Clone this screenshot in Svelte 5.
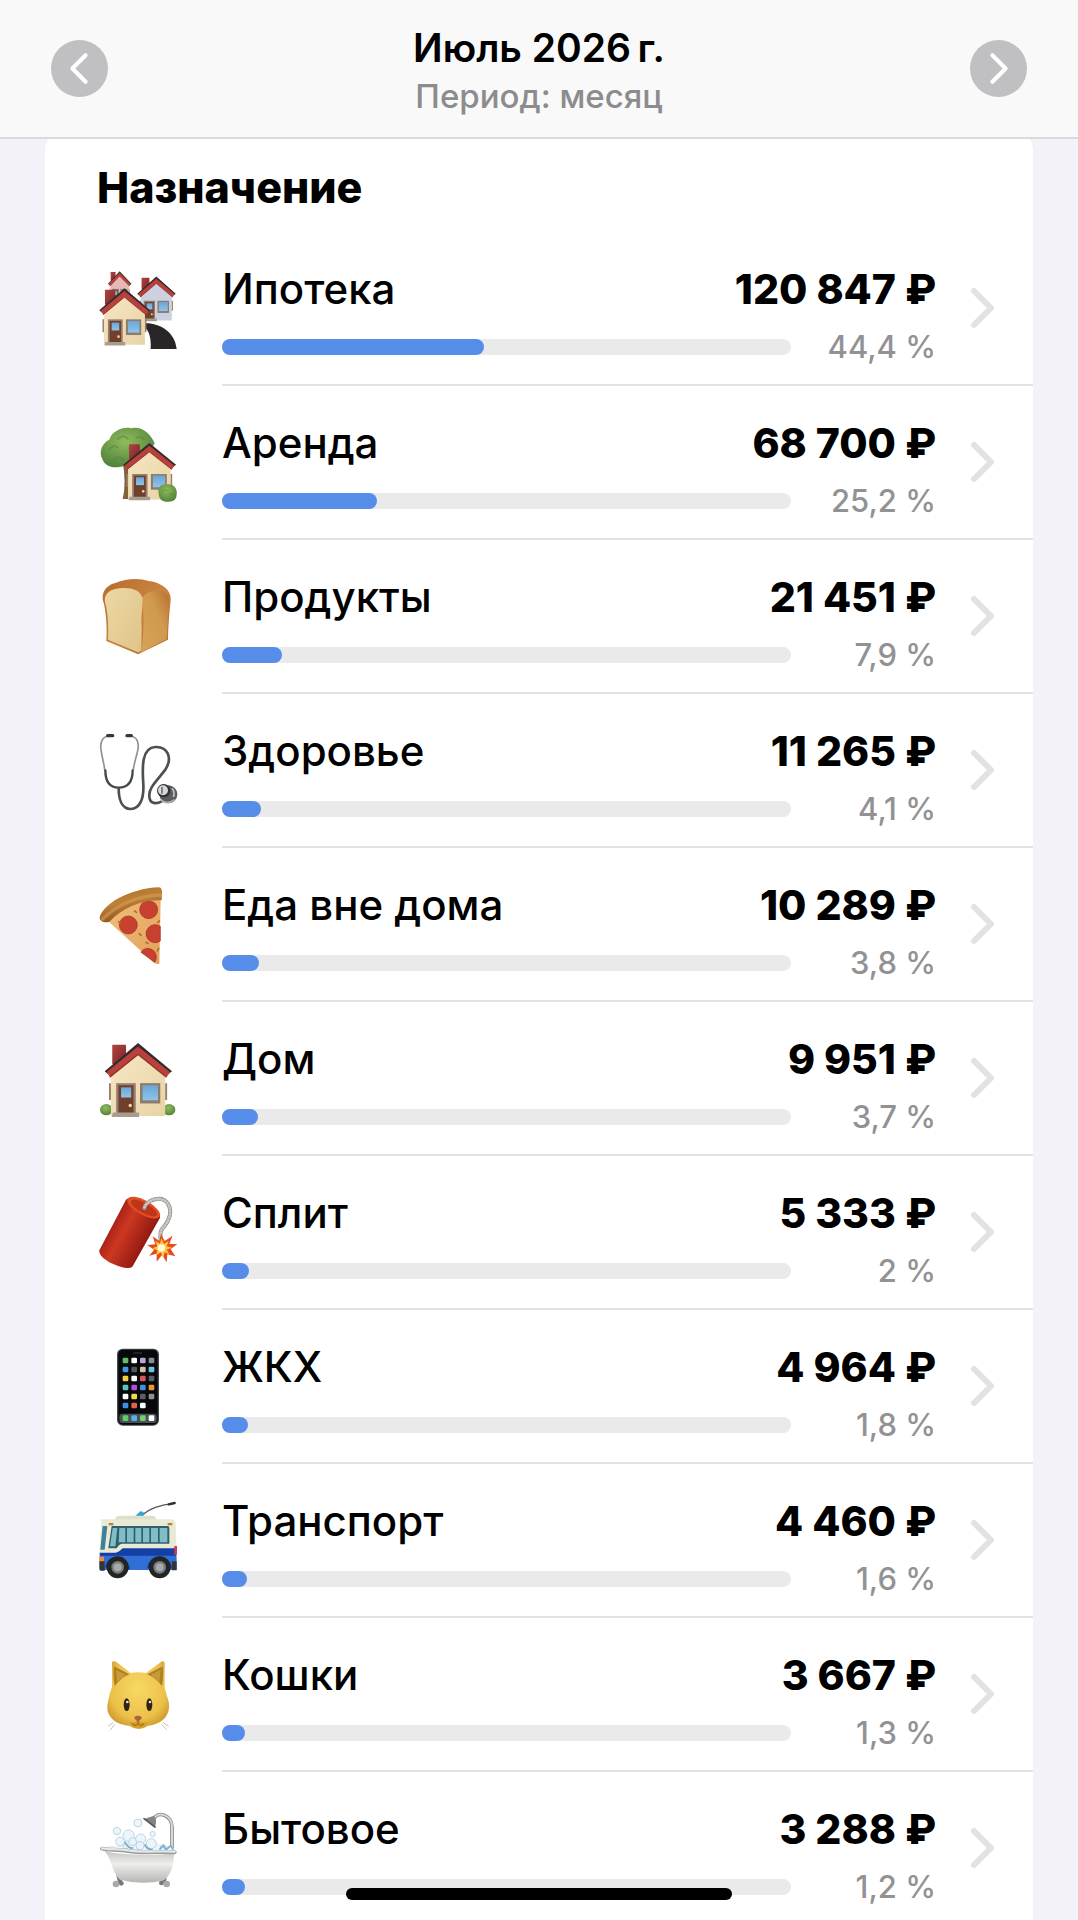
<script lang="ts">
    interface Category {
        name: string;
        icon: string;
        amount: string;
        percent: number;
    }

    const title = "Июль 2026\u2009г.";

    const categories: Category[] = [
        { name: "Ипотека", icon: "village", amount: "120 847", percent: 44.4 },
        { name: "Аренда", icon: "garden", amount: "68 700", percent: 25.2 },
        { name: "Продукты", icon: "bread", amount: "21 451", percent: 7.9 },
        { name: "Здоровье", icon: "stethoscope", amount: "11 265", percent: 4.1 },
        { name: "Еда вне дома", icon: "pizza", amount: "10 289", percent: 3.8 },
        { name: "Дом", icon: "house", amount: "9 951", percent: 3.7 },
        { name: "Сплит", icon: "dynamite", amount: "5 333", percent: 2 },
        { name: "ЖКХ", icon: "phone", amount: "4 964", percent: 1.8 },
        { name: "Транспорт", icon: "trolleybus", amount: "4 460", percent: 1.6 },
        { name: "Кошки", icon: "cat", amount: "3 667", percent: 1.3 },
        { name: "Бытовое", icon: "bath", amount: "3 288", percent: 1.2 },
    ];

    const appColors = [
        ["#5fbf62", "#fff", "#b9a3dc", "#8a8d90"],
        ["#3f9be0", "#55555f", "#d8bfa8", "#6cc3e8"],
        ["#f3cf45", "#fff", "#d9545c", "#56606a"],
        ["#55c8bd", "#b04be0", "#3e8fe0", "#ee9436"],
        ["#fff", "#eedb50", "#5a5d66", "#8d9094"],
        ["#3f8fe2", "#e2604e", "#fff"],
    ];

    const dockColors = ["#5fce6b", "#4fb4ea", "#6bd070", "#fff"];

    function formatPercent(value: number) {
        return String(value).replace(".", ",") + " %";
    }
</script>

{#snippet house(wall: string)}
    <rect x="12" y="0" width="42" height="56" rx="2" fill="url(#brick)" />
    <path d="M8 80 L91 12 L174 80 V204 H8 Z" fill={wall} />
    <path d="M-11 76 L91 -5 L195 76 L184 84 L91 14 L-2 84 Z" fill="#342a2c" />
    <path d="M-6 79 L91 5 L189 79 L178 93 L91 28 L6 93 Z" fill="#b8413c" />
    <path d="M4 93 L91 28 L178 93" fill="none" stroke="#8d2a2a" stroke-width="3" />
    <path d="M2 110 H8 V158 H2 Z M174 110 H180 V158 H174 Z" fill="#9c8068" />
    <rect x="24" y="110" width="60" height="88" fill="#958070" />
    <rect x="31" y="116" width="46" height="82" fill="#70402d" />
    <rect x="39" y="122" width="31" height="29" fill="url(#glass)" />
    <circle cx="67" cy="174" r="5" fill="#f6d9a4" />
    <path d="M14 194 H94 V207 H10 Z" fill="#a89c8e" />
    <rect x="97" y="110" width="62" height="58" fill="#8d7c6c" />
    <rect x="105" y="116" width="47" height="43" fill="url(#glass)" />
{/snippet}

{#snippet categoryIcon(kind: string)}
    <svg class="icon" viewBox="0 0 240 240" aria-hidden="true">
        {#if kind === "village"}
            <g transform="translate(34 9) scale(0.34 0.46)">{@render house("#e6b9b7")}</g>
            <g transform="translate(124 26) scale(0.56 0.63)">{@render house("#ccd1e0")}</g>
            <path d="M140 163 C180 162 230 184 236 240 H158 C160 210 154 184 140 176 Z" fill="#292628" />
            <g transform="translate(12 62) scale(0.74 0.81)">{@render house("url(#wall)")}</g>
        {:else if kind === "garden"}
            <path d="M73 110 H96 L100 228 H74 Q86 180 73 110 Z" fill="#83613b" />
            <path d="M14 110 C0 86 14 58 34 50 C42 24 76 10 100 16 C130 8 160 34 170 62 L150 86 C130 98 104 104 92 124 C60 140 22 134 14 110 Z" fill="url(#leaf)" />
            <path d="M34 80 q12 -18 26 -6 M60 48 q16 -16 30 0 M94 76 q16 -14 26 2 M48 110 q14 -14 28 0 M118 44 q12 -8 20 6" fill="none" stroke="#4e7e35" stroke-width="6" stroke-linecap="round" opacity="0.4" />
            <g transform="translate(84 64) scale(0.77 0.81)">{@render house("url(#wall)")}</g>
            <path d="M182 210 C178 192 192 182 206 184 C224 180 240 196 236 214 C236 232 222 238 208 236 C192 238 182 226 182 210 Z" fill="url(#leaf)" />
            <path d="M194 206 q8 -10 16 0 M214 216 q8 -8 14 0" fill="none" stroke="#4e7e35" stroke-width="4" opacity="0.4" />
        {:else if kind === "bread"}
            <path d="M18 80 C6 50 24 24 52 18 C84 4 124 2 152 12 C188 16 222 38 218 70 C216 96 212 120 210 188 L120 232 L25 192 C28 150 24 110 18 80 Z" fill="url(#crust)" />
            <path d="M130 64 C166 26 206 38 214 66 C210 110 208 150 206 186 L130 226 C138 160 140 100 130 64 Z" fill="url(#crustSide)" />
            <path d="M24 86 C12 52 34 38 64 34 C100 30 128 40 133 62 C136 86 128 110 131 150 L130 221 L120 226 L30 188 C32 150 30 116 24 86 Z" fill="url(#crumb)" />
        {:else if kind === "stethoscope"}
            <g fill="none" stroke-linecap="round">
                <path d="M34 15 C14 16 4 34 10 62 C13 84 18 96 20 116 M96 15 C116 16 126 34 118 64 C112 88 108 98 106 116" stroke="#8e9294" stroke-width="5" />
                <path d="M29 14 H44 M87 14 H100" stroke="#35383a" stroke-width="10" />
                <path d="M22 118 C22 154 36 170 62 170 C90 170 104 152 104 118" stroke="#44484b" stroke-width="7" />
                <path d="M62 172 C62 206 72 234 98 234 C126 234 138 202 136 160 C132 104 132 50 172 48 C210 46 224 82 202 116 C178 148 152 170 154 194 C154 222 178 218 190 212" stroke="#4c5053" stroke-width="8" />
            </g>
            <circle cx="211" cy="190" r="27" fill="#5a5d5f" />
            <path d="M188 206 Q206 224 230 206" stroke="#aeb1b3" stroke-width="5" fill="none" />
            <circle cx="197" cy="179" r="20" fill="#303233" />
            <circle cx="195" cy="178" r="15" fill="#d7d9da" />
            <path d="M192 168 V188" stroke="#6f7274" stroke-width="5" fill="none" />
            <path d="M222 172 Q232 184 226 198" stroke="#c4c6c7" stroke-width="5" fill="none" />
        {:else if kind === "pizza"}
            <path d="M30 108 C76 64 126 44 188 44 L184 236 C176 240 168 234 160 226 Z" fill="url(#cheese)" />
            <g fill="#c8402f" stroke="#9f2f20" stroke-width="2">
                <circle cx="152" cy="74" r="27" />
                <circle cx="91" cy="120" r="27" />
                <path d="M187 124 A27 27 0 1 0 187 168 Z" />
                <path d="M129 202 C138 184 166 188 173 206 C178 220 172 228 170 232 Z" />
            </g>
            <path d="M110 78 l6 4 M124 146 l5 5 M184 108 l-5 4 M144 172 l6 3 M182 190 l-4 8 M62 110 l6 2" stroke="#b86b2c" stroke-width="5" stroke-linecap="round" />
            <path d="M5 98 C12 60 92 10 184 7 Q192 8 192 22 L191 46 C128 44 76 68 34 110 C22 116 4 108 5 98 Z" fill="url(#pizzaCrust)" />
            <path d="M14 102 C56 60 118 32 188 30" fill="none" stroke="#d79c50" stroke-width="10" stroke-linecap="round" opacity="0.6" />
        {:else if kind === "house"}
            <ellipse cx="25" cy="212" rx="19" ry="17" fill="url(#leaf)" />
            <ellipse cx="213" cy="212" rx="19" ry="17" fill="url(#leaf)" />
            <g transform="translate(31 17) scale(0.98 1.05)">{@render house("url(#wall)")}</g>
        {:else if kind === "dynamite"}
            <path d="M84 20 C104 4 190 50 186 74 L104 220 C96 238 0 204 4 172 Z" fill="url(#tnt)" />
            <ellipse cx="137" cy="44" rx="55" ry="22" transform="rotate(29 137 44)" fill="#e04c25" />
            <ellipse cx="138" cy="45" rx="44" ry="15" transform="rotate(29 138 45)" fill="#bf3518" />
            <path d="M139 46 C142 22 190 4 210 32 C228 62 206 92 192 108 C186 118 186 128 188 142" fill="none" stroke="#8e8e8a" stroke-width="12" stroke-linecap="round" />
            <path d="M139 46 C142 22 190 4 210 32 C228 62 206 92 192 108 C186 118 186 128 188 142" fill="none" stroke="#cbcac4" stroke-width="8" stroke-dasharray="8 1" />
            <path d="M189 122 L200 144 L224 128 L214 152 L238 154 L218 168 L232 190 L208 184 L206 208 L192 186 L176 206 L176 182 L154 188 L168 170 L148 156 L172 154 L164 130 L184 144 Z" fill="#e54c22" />
            <path d="M190 136 L198 152 L212 144 L206 160 L222 164 L206 170 L214 184 L200 178 L196 194 L188 178 L174 188 L178 172 L164 166 L178 160 L172 144 L186 152 Z" fill="#ffc83c" />
            <circle cx="190" cy="165" r="11" fill="#fffbd8" />
        {:else if kind === "phone"}
            <rect x="57" y="5" width="126" height="231" rx="17" fill="#43484e" />
            <rect x="61" y="8" width="118" height="225" rx="14" fill="#07080a" />
            <rect x="105" y="15" width="28" height="6" rx="3" fill="#20242a" />
            {#each appColors as line, row}
                {#each line as color, col}
                    <rect x={74 + col * 26} y={32 + row * 27} width="17" height="17" rx="4" fill={color} />
                {/each}
            {/each}
            <rect x="64" y="200" width="112" height="28" rx="9" fill="#4c4f54" />
            {#each dockColors as color, col}
                <rect x={74 + col * 26} y="205" width="17" height="17" rx="4" fill={color} />
            {/each}
        {:else if kind === "trolleybus"}
            <path d="M134 43 C150 24 190 10 226 8" fill="none" stroke="#55585a" stroke-width="4" />
            <path d="M212 10 L230 6" stroke="#2c2e30" stroke-width="7" stroke-linecap="round" />
            <path d="M112 44 L128 30 L140 36 L136 46 Z" fill="#36a5cc" />
            <path d="M50 58 Q52 44 66 44 H164 Q174 46 176 58 Z" fill="#dedfca" />
            <path d="M8 55 H222 Q232 56 233 70 L236 160 H4 L10 64 Z" fill="#e9ead6" />
            <path d="M14 75 H28 L20 146 H7 Z" fill="#3b8299" />
            <path d="M41 75 H210 Q214 76 214 82 V128 H72 Q62 130 56 142 H31 Z" fill="#315f70" />
            <path d="M44 81 H58 L52 136 H36 Z M64 81 H82 V124 H62 Z M87 81 H107 V124 H87 Z M112 81 H130 V124 H112 Z M135 81 H154 V124 H135 Z M159 81 H180 V124 H159 Z M185 81 H208 V124 H185 Z" fill="#7fbdc7" />
            <path d="M32 66 h14 v7 h-14 z M209 66 h14 v7 h-14 z" fill="#c57c2d" />
            <path d="M5 155 H54 Q64 153 74 142 H235 V206 H6 Z" fill="#143fa4" />
            <path d="M6 164 H235 V206 H8 Z" fill="#306fd6" />
            <path d="M229 135 h8 v26 h-8 z" fill="#d23b48" />
            <path d="M4 167 h14 v16 h-14 z" fill="#e98b45" />
            <path d="M4 181 H20 V209 H8 Q3 208 4 200 Z M222 181 H236 V208 H222 Z" fill="#343638" />
            <path d="M22 200 C24 158 88 156 96 204 Z M148 202 C152 156 216 156 222 202 Z" fill="#173d8c" />
            {#each [59, 185] as cx}
                <circle {cx} cy="199" r="33" fill="#222425" />
                <circle {cx} cy="199" r="19" fill="#787b7d" />
                <circle {cx} cy="199" r="12" fill="#a7a9aa" />
            {/each}
        {:else if kind === "cat"}
            <path d="M46 202 L30 214 M50 208 L36 226 M194 202 L212 214 M190 208 L206 224" stroke="#c6c2b4" stroke-width="3" />
            <path d="M42 22 Q46 16 56 22 L98 54 Q120 50 144 54 L190 20 Q200 16 200 28 L200 98 Q206 120 212 140 C220 184 188 208 150 212 Q122 232 94 212 C46 208 20 178 30 140 Q34 116 42 96 Z" fill="url(#fur)" />
            <path d="M48 34 L94 58 Q66 70 50 94 Q44 62 48 34 Z M194 34 L148 58 Q176 70 192 94 Q198 62 194 34 Z" fill="#ae8129" />
            <path d="M54 44 L84 60 Q66 70 58 82 Z M188 44 L158 60 Q176 70 184 82 Z" fill="#c89a3b" />
            <path d="M94 200 Q112 208 120 194 Q130 208 150 200 Q142 214 122 219 Q104 216 94 200 Z" fill="#d69b26" />
            <ellipse cx="86" cy="149" rx="9" ry="19" fill="#302316" />
            <ellipse cx="154" cy="149" rx="9" ry="19" fill="#302316" />
            <circle cx="88" cy="141" r="4" fill="#f0e3c2" />
            <circle cx="156" cy="141" r="4" fill="#f0e3c2" />
            <path d="M109 186 Q120 178 131 186 Q131 195 120 199 Q109 195 109 186 Z" fill="#a56543" />
            <path d="M120 198 V206 Q112 216 102 206 M120 206 Q128 216 138 206" fill="none" stroke="#91601a" stroke-width="3" />
        {:else}
            <path d="M222 124 V54 C221 18 180 2 164 34" fill="none" stroke="#858889" stroke-width="11" />
            <path d="M222 124 V54 C221 18 180 2 164 34" fill="none" stroke="#d7d8d8" stroke-width="6" />
            <path d="M138 30 L168 20 Q180 36 170 54 Z" fill="#818486" />
            <path d="M138 29 L171 54" stroke="#55585a" stroke-width="5" stroke-linecap="round" />
            <path d="M14 122 C30 102 46 112 62 112 Q86 84 108 104 Q136 92 156 110 Q184 98 202 112 Q222 106 234 126 Z" fill="#eaf5fc" />
            <g fill="#e8f4fb" fill-opacity="0.85" stroke="#b3cddd" stroke-width="2.5">
                <circle cx="120" cy="42" r="12" /><circle cx="57" cy="66" r="11" /><circle cx="164" cy="75" r="8" />
                <circle cx="92" cy="80" r="17" /><circle cx="66" cy="98" r="13" /><circle cx="104" cy="98" r="12" />
                <circle cx="128" cy="90" r="15" /><circle cx="160" cy="104" r="15" /><circle cx="126" cy="110" r="12" />
                <circle cx="196" cy="116" r="9" /><circle cx="84" cy="112" r="8" />
            </g>
            <path d="M80 98 Q92 122 106 116 M140 106 Q146 122 164 122 M184 122 L196 110 L204 122 L218 110 L226 122" fill="none" stroke="#77aeca" stroke-width="5" />
            <path d="M54 194 L62 228 L78 206 L94 214 L88 190 Z M208 194 L202 228 L186 208 L170 214 L180 190 Z" fill="#737677" />
            <circle cx="54" cy="225" r="10" fill="#a7aaab" /><circle cx="70" cy="223" r="7" fill="#777a7b" />
            <circle cx="206" cy="225" r="10" fill="#a7aaab" /><circle cx="190" cy="222" r="7" fill="#777a7b" />
            <path d="M20 126 C60 138 170 142 228 132 C228 168 220 196 198 214 Q132 230 66 212 C42 190 40 150 20 126 Z" fill="url(#tub)" />
            <path d="M12 119 C36 124 60 120 90 126 C140 134 190 126 230 130" fill="none" stroke="#999c9c" stroke-width="12" stroke-linecap="round" />
            <path d="M12 118 C36 122 60 118 90 124 C140 132 190 124 230 128" fill="none" stroke="#e5e6e5" stroke-width="7" stroke-linecap="round" />
        {/if}
    </svg>
{/snippet}

<svg class="defs" width="0" height="0" aria-hidden="true">
    <defs>
        <linearGradient id="wall" x1="0" y1="0" x2="1" y2="1">
            <stop offset="0" stop-color="#f7e7c4" />
            <stop offset="1" stop-color="#e8d3a6" />
        </linearGradient>
        <linearGradient id="brick" x1="0" y1="0" x2="1" y2="1">
            <stop offset="0" stop-color="#b04440" />
            <stop offset="1" stop-color="#7c2527" />
        </linearGradient>
        <linearGradient id="glass" x1="0" y1="0" x2="0" y2="1">
            <stop offset="0" stop-color="#6ba6d8" />
            <stop offset="1" stop-color="#8fc4ea" />
        </linearGradient>
        <radialGradient id="leaf" cx="0.45" cy="0.35" r="0.7">
            <stop offset="0" stop-color="#8fbc5d" />
            <stop offset="1" stop-color="#4f7f38" />
        </radialGradient>
        <linearGradient id="crust" x1="0" y1="0" x2="1" y2="1">
            <stop offset="0" stop-color="#b56a2c" />
            <stop offset="0.5" stop-color="#c98440" />
            <stop offset="1" stop-color="#b36f2e" />
        </linearGradient>
        <linearGradient id="crustSide" x1="0" y1="1" x2="1" y2="0">
            <stop offset="0" stop-color="#d5a359" />
            <stop offset="0.6" stop-color="#d09a4e" />
            <stop offset="1" stop-color="#b8702f" />
        </linearGradient>
        <linearGradient id="crumb" x1="0" y1="0" x2="1" y2="1">
            <stop offset="0" stop-color="#ecd8a4" />
            <stop offset="1" stop-color="#dfc389" />
        </linearGradient>
        <linearGradient id="cheese" x1="0" y1="0" x2="1" y2="1">
            <stop offset="0" stop-color="#f0bf78" />
            <stop offset="1" stop-color="#e2a05a" />
        </linearGradient>
        <linearGradient id="pizzaCrust" x1="0" y1="0" x2="0.4" y2="1">
            <stop offset="0" stop-color="#a9702b" />
            <stop offset="0.5" stop-color="#bd8038" />
            <stop offset="1" stop-color="#89501f" />
        </linearGradient>
        <linearGradient id="tnt" gradientUnits="userSpaceOnUse" x1="40" y1="90" x2="150" y2="150">
            <stop offset="0" stop-color="#a52016" />
            <stop offset="0.35" stop-color="#cc3820" />
            <stop offset="1" stop-color="#8f1712" />
        </linearGradient>
        <radialGradient id="fur" cx="0.5" cy="0.4" r="0.65">
            <stop offset="0" stop-color="#f8d965" />
            <stop offset="0.7" stop-color="#ecc048" />
            <stop offset="1" stop-color="#c8922a" />
        </radialGradient>
        <linearGradient id="tub" x1="0" y1="0" x2="0" y2="1">
            <stop offset="0" stop-color="#c4c5c3" />
            <stop offset="0.4" stop-color="#eeeeec" />
            <stop offset="1" stop-color="#b5b5b2" />
        </linearGradient>
    </defs>
</svg>

<div class="screen">
    <header>
        <button class="nav" aria-label="Предыдущий месяц">
            <svg viewBox="0 0 56 56"><path d="M34 15 L21 28 L34 41" /></svg>
        </button>
        <div class="period">
            <h1>{title}</h1>
            <p>Период: месяц</p>
        </div>
        <button class="nav" aria-label="Следующий месяц">
            <svg viewBox="0 0 56 56"><path d="M22 15 L35 28 L22 41" /></svg>
        </button>
    </header>

    <main>
        <h2>Назначение</h2>
        <ul>
            {#each categories as category (category.name)}
                <li>
                    <button class="row">
                        {@render categoryIcon(category.icon)}
                        <span class="body">
                            <span class="info">
                                <span class="line">
                                    <span class="name">{category.name}</span>
                                    <span class="amount">{category.amount} ₽</span>
                                </span>
                                <span class="line">
                                    <span class="track">
                                        <span class="fill" style="width: calc(16px + (100% - 16px) * {category.percent / 100})"></span>
                                    </span>
                                    <span class="percent">{formatPercent(category.percent)}</span>
                                </span>
                            </span>
                            <svg class="chevron" viewBox="0 0 24 42" aria-hidden="true"><path d="M3 4 L20 21 L3 38" /></svg>
                        </span>
                    </button>
                </li>
            {/each}
        </ul>
    </main>

    <div class="home-indicator"></div>
</div>

<style>
    :global(body) {
        margin: 0;
        background: #f3f2f8;
    }

    .defs {
        position: absolute;
    }

    .screen {
        position: relative;
        height: 100vh;
        overflow: hidden;
        font-family: Inter, "Noto Sans", sans-serif;
        color: #000;
        background: #f3f2f8;
    }

    header {
        position: relative;
        z-index: 1;
        display: flex;
        align-items: center;
        justify-content: space-between;
        box-sizing: border-box;
        height: 139px;
        padding: 0 51px;
        background: #f9f9f9;
        border-bottom: 2px solid #dadadc;
    }

    h1, h2, p, ul {
        margin: 0;
        padding: 0;
    }

    button {
        border: 0;
        padding: 0;
        background: none;
        font: inherit;
        color: inherit;
        cursor: pointer;
    }

    .period {
        padding-top: 6px;
        text-align: center;
    }

    h1 {
        font-size: 39px;
        line-height: 48px;
        font-weight: 600;
    }

    .period p {
        font-size: 33px;
        line-height: 48px;
        font-weight: 500;
        color: #8c8c8e;
    }

    .nav {
        width: 57px;
        height: 57px;
        border-radius: 50%;
        background: #c0c0c2;
    }

    .nav svg {
        display: block;
    }

    .nav path {
        fill: none;
        stroke: #fff;
        stroke-width: 4;
        stroke-linecap: round;
        stroke-linejoin: round;
    }

    main {
        margin: -12px 45px 0;
        padding: 32px 0;
        background: #fff;
        border-radius: 24px;
    }

    h2 {
        padding-left: 52px;
        font-size: 43px;
        line-height: 56px;
        font-weight: 800;
        margin-bottom: 17px;
    }

    ul {
        list-style: none;
    }

    .row {
        display: flex;
        align-items: center;
        width: 100%;
        height: 154px;
        padding-left: 53px;
        text-align: left;
    }

    .icon {
        flex: none;
        width: 80px;
        height: 80px;
        overflow: visible;
    }

    .body {
        flex: 1;
        display: flex;
        align-items: center;
        box-sizing: border-box;
        height: 154px;
        margin-left: 44px;
        padding-right: 38px;
        border-bottom: 2px solid #e4e4e5;
    }

    .info {
        flex: 1;
        display: flex;
        flex-direction: column;
        gap: 10px;
        padding-top: 20px;
    }

    .line {
        display: flex;
        align-items: center;
        justify-content: space-between;
    }

    .name,
    .amount {
        line-height: 48px;
        white-space: nowrap;
    }

    .name {
        font-size: 42px;
        font-weight: 500;
    }

    .amount {
        font-size: 41px;
        font-weight: 800;
    }

    .track {
        flex: 1;
        height: 16px;
        border-radius: 8px;
        background: #eaeaea;
    }

    .fill {
        display: block;
        height: 16px;
        border-radius: 8px;
        background: #568de9;
    }

    .percent {
        width: 145px;
        font-size: 31px;
        line-height: 48px;
        font-weight: 500;
        text-align: right;
        color: #929294;
    }

    .chevron {
        flex: none;
        width: 24px;
        height: 42px;
        margin-left: 35px;
    }

    .chevron path {
        fill: none;
        stroke: #e2e2e3;
        stroke-width: 6;
        stroke-linecap: round;
        stroke-linejoin: round;
    }

    .home-indicator {
        position: absolute;
        z-index: 2;
        bottom: 20px;
        left: 50%;
        width: 386px;
        height: 12px;
        border-radius: 6px;
        background: #000;
        transform: translateX(-50%);
    }
</style>
